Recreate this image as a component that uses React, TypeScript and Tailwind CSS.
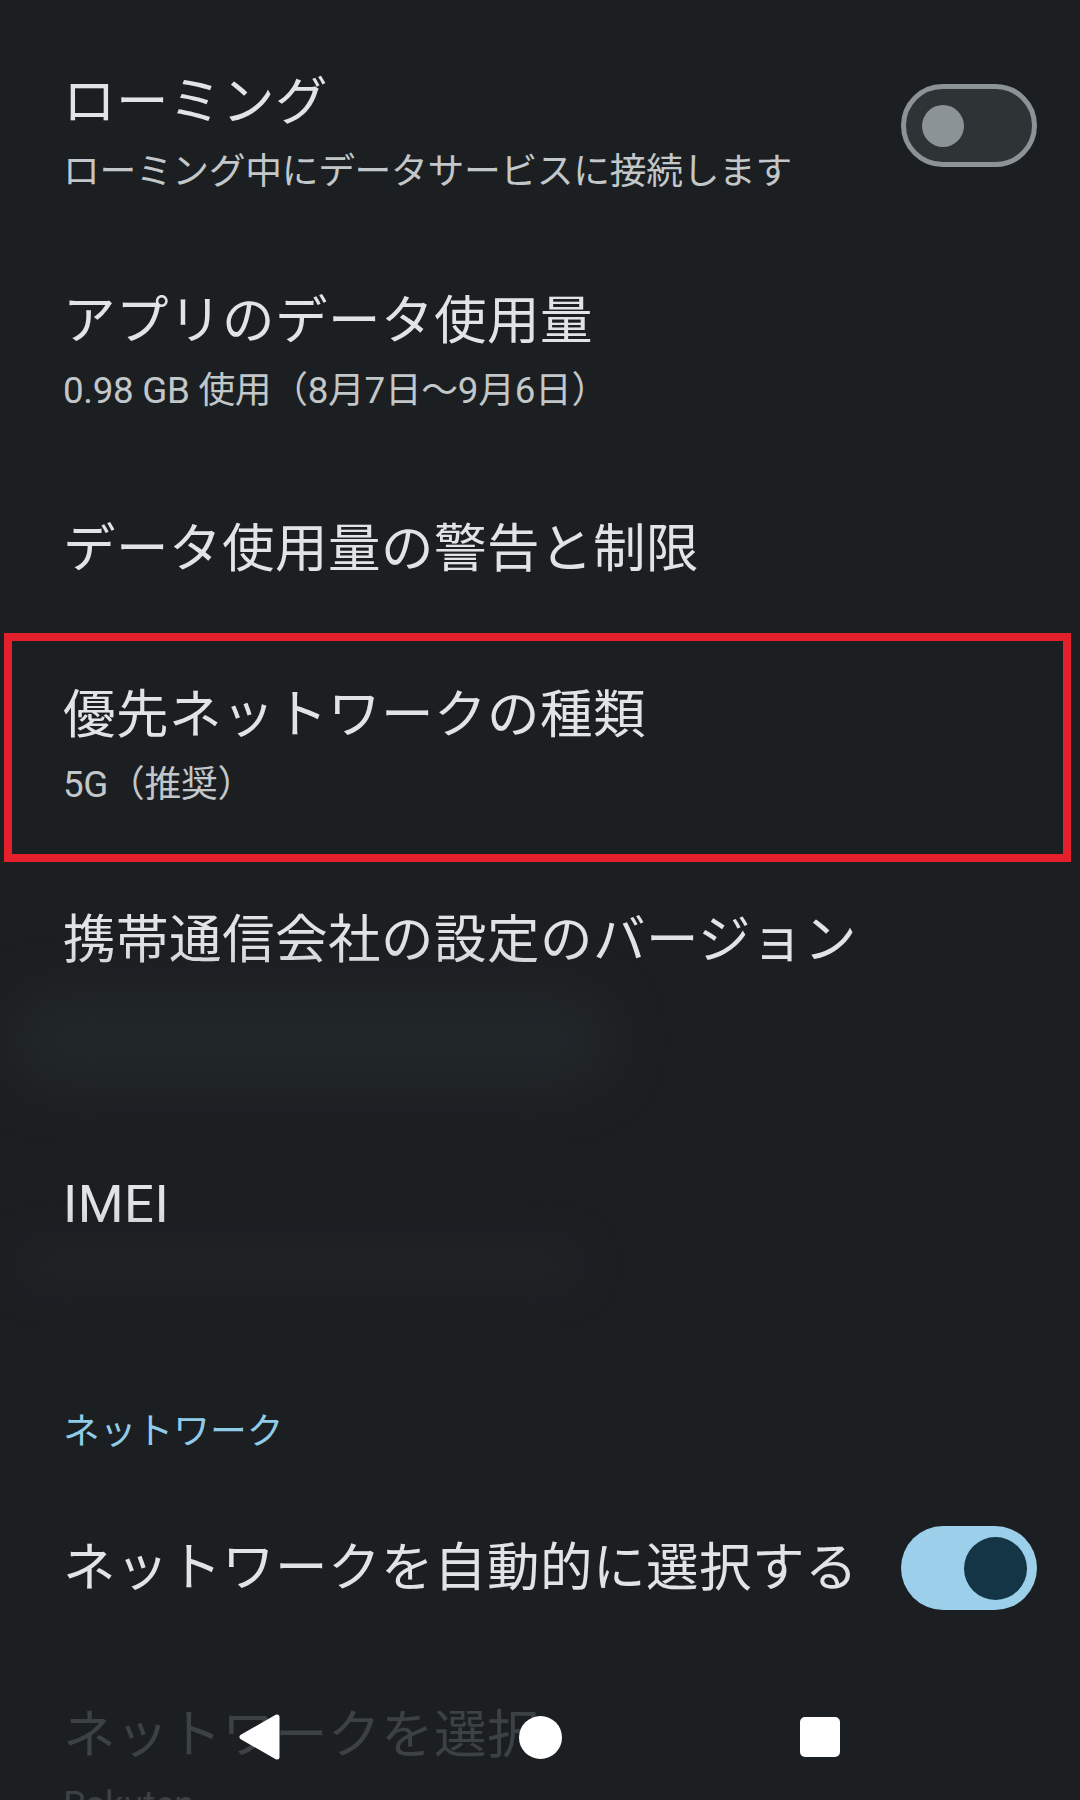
import React from "react";

const font = { fontFamily: 'Roboto, "Noto Sans CJK JP", sans-serif' };

function Title({ children, className = "" }: { children: React.ReactNode; className?: string }) {
  return <div className={`text-[52.5px] leading-[70px] tracking-[0.5px] text-[#e2e3e5] whitespace-nowrap ${className}`}>{children}</div>;
}

function Sub({ children, className = "" }: { children: React.ReactNode; className?: string }) {
  return <div className={`mt-[10px] text-[36.75px] leading-[50px] tracking-[-0.3px] text-[#c2c7ca] whitespace-nowrap ${className}`}>{children}</div>;
}

function SwitchOff() {
  return (
    <div className="w-[136px] h-[83px] shrink-0 rounded-full border-[5px] border-[#8c9396] bg-[#2e3336] flex items-center pl-[16px]">
      <div className="w-[42px] h-[42px] rounded-full bg-[#8c9396]" />
    </div>
  );
}

function SwitchOn() {
  return (
    <div className="w-[136px] h-[84px] shrink-0 rounded-full bg-[#9ccfea] flex items-center justify-end pr-[10px]">
      <div className="w-[63px] h-[63px] rounded-full bg-[#133545]" />
    </div>
  );
}

export default function App() {
  return (
    <div style={font} className="relative w-[1080px] h-[1800px] overflow-hidden bg-[#1c1f22]">
      <div className="flex flex-col">
        {/* Roaming */}
        <div className="flex items-start justify-between pl-[63px] pr-[43px]">
          <div className="pt-[67px]">
            <Title>ローミング</Title>
            <Sub>ローミング中にデータサービスに接続します</Sub>
          </div>
          <div className="mt-[84px]">
            <SwitchOff />
          </div>
        </div>

        {/* App data usage */}
        <div className="mt-[89px] pl-[63px]">
          <Title>アプリのデータ使用量</Title>
          <Sub>0.98 GB 使用（8月7日〜9月6日）</Sub>
        </div>

        {/* Data warning */}
        <div className="mt-[98px] pl-[63px]">
          <Title>データ使用量の警告と制限</Title>
        </div>

        {/* Preferred network type (highlighted) */}
        <div className="mt-[49px] ml-[4px] mr-[9px] h-[229px] border-[8px] border-[#e3202b] pl-[51px] pt-[39px]">
          <Title>優先ネットワークの種類</Title>
          <Sub>5G（推奨）</Sub>
        </div>

        {/* Carrier settings version */}
        <div className="mt-[43px] pl-[63px]">
          <Title>携帯通信会社の設定のバージョン</Title>
        </div>
        <div className="h-[130px] pt-[20px] pl-[10px]">
          <div className="w-[600px] h-[90px] rounded-full bg-[#252b2e] blur-[28px] opacity-70" />
        </div>

        {/* IMEI */}
        <div className="mt-[64px] pl-[63px]">
          <Title>IMEI</Title>
        </div>
        <div className="h-[51px] pt-[6px] pl-[20px]">
          <div className="w-[560px] h-[40px] rounded-full bg-[#22272a] blur-[20px] opacity-60" />
        </div>

        {/* Network header */}
        <div className="mt-[117px] pl-[63px] text-[36.75px] leading-[50px] text-[#90cce8]">ネットワーク</div>

        {/* Auto select */}
        <div className="mt-[69px] flex items-center justify-between pl-[63px] pr-[43px]">
          <Title>ネットワークを自動的に選択する</Title>
          <SwitchOn />
        </div>

        {/* Select network (disabled) */}
        <div className="mt-[90px] pl-[63px]">
          <Title className="!text-[#3c4144]">ネットワークを選択</Title>
          <Sub className="!text-[#3c4144]">Rakuten</Sub>
        </div>
      </div>

      {/* Navigation bar overlay */}
      <div className="absolute bottom-0 left-0 right-0 h-[126px] flex justify-center items-center">
        <div className="w-[280px] flex items-center justify-center">
          <svg width="42" height="46" viewBox="0 0 42 46">
            <polygon points="38,3 38,43 3,23" fill="#ffffff" stroke="#ffffff" strokeWidth="5" strokeLinejoin="round" />
          </svg>
        </div>
        <div className="w-[280px] flex items-center justify-center">
          <div className="w-[43px] h-[43px] rounded-full bg-white" />
        </div>
        <div className="w-[280px] flex items-center justify-center">
          <div className="w-[40px] h-[40px] rounded-[5px] bg-white" />
        </div>
      </div>
    </div>
  );
}
